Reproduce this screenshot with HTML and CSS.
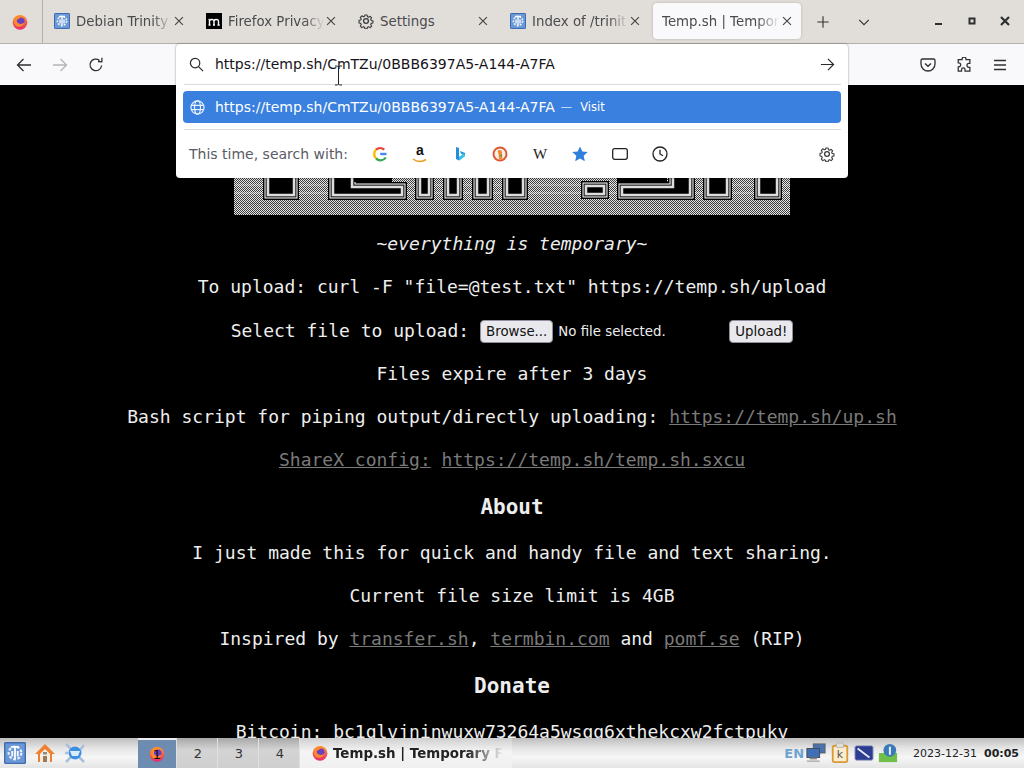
FILE: index.html
```html
<!DOCTYPE html>
<html lang="en">
<head>
<meta charset="utf-8">
<title>Temp.sh | Temporary File Sharing</title>
<link rel="stylesheet" href="styles.css">
</head>
<body>
<svg class="defs" width="0" height="0" aria-hidden="true">
  <defs>
    <linearGradient id="ffg" x1="0" y1="0" x2="0" y2="1"><stop offset="0" stop-color="#ff9a2e"/><stop offset="1" stop-color="#e8286e"/></linearGradient>
    <symbol id="firefox" viewBox="0 0 16 16">
      <circle cx="8" cy="8.3" r="7.4" fill="url(#ffg)"/>
      <circle cx="8.6" cy="7.6" r="4" fill="#6b3fc0"/>
      <path d="M3 4C5 1 10 .6 13 3c-3-1-5 0-6 2-2 0-3 1-2 3 1 2 5 3 8 0-1 4-6 6-9 4C2 10 1.500 7 3 4z" fill="#ff8a2a"/>
    </symbol>
    <symbol id="trinity" viewBox="0 0 16 16">
      <rect width="16" height="16" rx="1" fill="#6a98d6"/>
      <rect x=".5" y=".5" width="15" height="15" rx="1" fill="none" stroke="#3f6cb0"/>
      <circle cx="8" cy="8" r="4.600" fill="none" stroke="#e8f0fa" stroke-width="1.600" stroke-dasharray="2 1.200"/>
      <path d="M5 3.500h6M8 3.500v9M6 6.500v4M10 6.500v4" stroke="#fff" stroke-width="1.300" fill="none"/>
    </symbol>
    <symbol id="gear" viewBox="0 0 16 16">
      <path d="M6.700 1.500h2.600l.4 2 1.300.6 1.800-1.100 1.800 1.800-1.100 1.800.6 1.300 2 .4v2.600l-2 .4-.6 1.300 1.100 1.800-1.800 1.800-1.800-1.100-1.300.6-.4 2H6.700l-.4-2-1.300-.6-1.800 1.100-1.800-1.800 1.100-1.800-.6-1.300-2-.4V7.800l2-.4.6-1.300-1.100-1.800L3.200 2.500 5 3.600l1.300-.6z" transform="translate(1.100 .7) scale(.86)" fill="none" stroke="#3b3b3f" stroke-width="1.300" stroke-linejoin="round"/>
      <circle cx="8" cy="8" r="2.400" fill="none" stroke="#3b3b3f" stroke-width="1.300"/>
    </symbol>
    <path id="tx" d="M3.500 3.500l9 9M12.500 3.500l-9 9"/>
    <pattern id="dither" width="2" height="2" patternUnits="userSpaceOnUse">
      <rect width="2" height="2" fill="#3c3c3c"/>
      <rect width="1" height="1" fill="#e8e8e8"/>
      <rect x="1" y="1" width="1" height="1" fill="#e8e8e8"/>
    </pattern>
    <g id="letters">
      <rect x="34" y="-5" width="26" height="115"/>
      <path d="M99-5v115h69V102H118V-5z"/>
      <rect x="186" y="-5" width="9" height="115"/>
      <rect x="214" y="-5" width="10" height="115"/>
      <rect x="243" y="-5" width="11" height="115"/>
      <rect x="273" y="-5" width="16" height="115"/>
      <rect x="352" y="101" width="18" height="8"/>
      <path d="M388 110h68V-5h-17v107h-51z"/>
      <rect x="474" y="-5" width="19" height="115"/>
      <rect x="525" y="-5" width="18" height="115"/>
    </g>
  </defs>
</svg>

<div class="app">
  <header class="tabbar">
    <div class="ff-button"><svg class="ico16"><use href="#firefox"/></svg></div>
    <div class="tab">
      <svg class="ico16"><use href="#trinity"/></svg>
      <span class="tab-title">Debian Trinity</span>
      <svg class="tab-x" viewBox="0 0 16 16"><use href="#tx"/></svg>
    </div>
    <div class="tab">
      <svg class="ico16" viewBox="0 0 16 16"><rect width="16" height="16" fill="#000"/><path d="M3.500 12V6.500M3.500 7.500c1-1.500 4.500-1.500 4.500 .5V12M8 7.500c1-1.500 4.500-1.500 4.500 .5V12M2.500 6.500h1M2.500 12h2M7 12h2M11.500 12h2.200" stroke="#fff" stroke-width="1.400" fill="none"/></svg>
      <span class="tab-title">Firefox Privacy</span>
      <svg class="tab-x" viewBox="0 0 16 16"><use href="#tx"/></svg>
    </div>
    <div class="tab">
      <svg class="ico16"><use href="#gear"/></svg>
      <span class="tab-title tab-plain">Settings</span>
      <svg class="tab-x" viewBox="0 0 16 16"><use href="#tx"/></svg>
    </div>
    <div class="tab">
      <svg class="ico16"><use href="#trinity"/></svg>
      <span class="tab-title">Index of /trinity</span>
      <svg class="tab-x" viewBox="0 0 16 16"><use href="#tx"/></svg>
    </div>
    <div class="tab tab-active">
      <span class="tab-title">Temp.sh | Temporary</span>
      <svg class="tab-x" viewBox="0 0 16 16"><use href="#tx"/></svg>
    </div>
    <svg class="tb-btn plus" viewBox="0 0 16 16"><path d="M8 1.500v13M1.500 8h13"/></svg>
    <svg class="tb-btn chevron" viewBox="0 0 16 16"><path d="M2.500 5.500L8 11l5.500-5.500"/></svg>
    <div class="winctl">
      <svg viewBox="0 0 12 12"><rect x="2" y="8" width="7" height="2" fill="#2e2e2e"/></svg>
      <svg viewBox="0 0 12 12"><rect x="3.500" y="3.500" width="5" height="5" fill="none" stroke="#2e2e2e" stroke-width="2"/></svg>
      <svg viewBox="0 0 12 12"><path d="M2 2l8 8M10 2l-8 8" stroke="#2e2e2e" stroke-width="2.200"/></svg>
    </div>
  </header>

  <nav class="navbar">
    <div class="nav-left">
      <svg class="nav-ico" viewBox="0 0 16 16"><path d="M15 8H1.500M7.500 2L1.500 8l6 6"/></svg>
      <svg class="nav-ico dim" viewBox="0 0 16 16"><path d="M1 8h13.500M8.500 2l6 6-6 6"/></svg>
      <svg class="nav-ico" viewBox="0 0 16 16"><path d="M13.600 8.500A5.800 5.800 0 1 1 11.500 3.400M10 4.500l3.800.3.200-4"/></svg>
    </div>
    <div class="nav-right">
      <svg class="nav-ico" viewBox="0 0 16 16"><path d="M2.500 2h11A1.500 1.500 0 0 1 15 3.500V7a7 7 0 0 1-14 0V3.500A1.500 1.500 0 0 1 2.500 2zM5 6.500L8 9.300 11 6.500"/></svg>
      <svg class="nav-ico" viewBox="0 0 16 16"><path d="M6 3V2.500a2 2 0 0 1 4 0V3h4v4h-1a2 2 0 0 0 0 4h1v4H9v-1.500a1.800 1.800 0 0 0-3.600 0V15H2v-4.500h.5a2 2 0 0 0 0-4H2V3z" transform="translate(.3 -.4) scale(.97)"/></svg>
      <svg class="nav-ico" viewBox="0 0 16 16"><path d="M2 3.500h12M2 8h12M2 12.500h12"/></svg>
    </div>
  </nav>

  <main class="page">
    <svg class="banner" width="556" height="130" viewBox="0 0 556 130" aria-hidden="true">
      <rect width="556" height="130" fill="url(#dither)"/>
      <rect y="107" width="556" height="2" fill="#fff" opacity=".25"/>
      <rect y="99" width="556" height="2" fill="#fff" opacity=".2"/>
      <rect y="118" width="556" height="1" fill="#000" opacity=".15"/>
      <use href="#letters" class="l1"/>
      <use href="#letters" class="l2"/>
      <use href="#letters" class="l3"/>
      <use href="#letters" class="l4"/>
      <rect x="120" y="88" width="38" height="9" fill="#000"/>
      <rect x="383" y="88" width="50" height="9" fill="#000"/>
    </svg>
    <p><em>~everything is temporary~</em></p>
    <p>To upload: curl -F "file=@test.txt" https://temp.sh/upload</p>
    <div class="upload-row">
      <span class="upload-label">Select file to upload:</span>
      <button class="fbtn browse" type="button">Browse...</button>
      <span class="nofile">No file selected.</span>
      <button class="fbtn" type="button">Upload!</button>
    </div>
    <p>Files expire after 3 days</p>
    <p>Bash script for piping output/directly uploading: <a href="#">https://temp.sh/up.sh</a></p>
    <p><a href="#">ShareX config:</a> <a href="#">https://temp.sh/temp.sh.sxcu</a></p>
    <h3>About</h3>
    <p>I just made this for quick and handy file and text sharing.</p>
    <p>Current file size limit is 4GB</p>
    <p>Inspired by <a href="#">transfer.sh</a>, <a href="#">termbin.com</a> and <a href="#">pomf.se</a> (RIP)</p>
    <h3>Donate</h3>
    <p>Bitcoin: bc1qlvjninwuxw73264a5wsgg6xthekcxw2fctpukv</p>
  </main>

  <footer class="taskbar">
    <div class="launchers">
      <svg class="ico22" viewBox="0 0 16 16"><use href="#trinity"/></svg>
      <svg class="ico22" viewBox="0 0 22 22"><path d="M11 2L1 12h3v8h14v-8h3z" fill="#f08030"/><path d="M6 12l5-5 5 5v8H6z" fill="#f4efe6"/><rect x="9" y="14" width="4" height="6" fill="#9b7a55"/><rect x="9" y="10" width="4" height="2.500" fill="#8a8a80"/></svg>
      <svg class="ico22" viewBox="0 0 22 22"><path d="M2 2l5 5M20 3l-4 5M2 20l5-5M20 20l-5-5M1 11h3" stroke="#a9bfdc" stroke-width="2.500"/><circle cx="11" cy="11" r="6.500" fill="#3f8fe0"/><path d="M6 9h10l-2 5H8z" fill="#d8ecfb"/></svg>
    </div>
    <div class="pager">
      <div class="desk desk-on"><svg class="ico16"><use href="#firefox"/></svg><span class="desk-n">1</span></div>
      <div class="desk">2</div>
      <div class="desk">3</div>
      <div class="desk">4</div>
    </div>
    <div class="task">
      <svg class="ico16"><use href="#firefox"/></svg>
      <span class="task-title">Temp.sh | Temporary File Sharing</span>
    </div>
    <div class="tray">
      <span class="lang">EN</span>
      <svg class="tray-ico" viewBox="0 0 22 22"><rect x="8" y="1" width="13" height="10" fill="#4a72ad" stroke="#5a5f68"/><rect x="1" y="6" width="14" height="10" fill="#3f6fb5" stroke="#44484f"/><rect x="4" y="16" width="8" height="2" fill="#888"/><rect x="1" y="19" width="14" height="2" fill="#b9b9b9"/></svg>
      <svg class="tray-ico" viewBox="0 0 22 22"><rect x="3" y="3" width="16" height="18" rx="2" fill="#fbeccb" stroke="#d8993a" stroke-width="2"/><rect x="7" y="0" width="8" height="5" rx="1" fill="#ddd" stroke="#999" stroke-width=".6"/><text x="11" y="17" class="tray-k">k</text></svg>
      <svg class="tray-ico" viewBox="0 0 22 22"><rect x="1" y="3" width="20" height="16" rx="2" fill="#2c3c90" stroke="#9fa6c5"/><path d="M4 6l13 10" stroke="#e6e9f5" stroke-width="2"/></svg>
      <svg class="tray-ico tray-last" viewBox="0 0 22 22"><rect x="1" y="11" width="20" height="10" fill="#6fbf4a"/><circle cx="13" cy="8" r="7" fill="#3a7ab8"/><rect x="12" y="4" width="2.200" height="9" fill="#e6eef8"/></svg>
      <span class="date">2023-12-31</span>
      <span class="time">00:05</span>
    </div>
  </footer>

  <div class="urlbar">
    <div class="url-row">
      <svg class="u-ico" viewBox="0 0 16 16"><circle cx="6.500" cy="6.500" r="5"/><path d="M10.200 10.200L15 15"/></svg>
      <span class="url-text">https://temp.sh/CmTZu/0BBB6397A5-A144-A7FA</span>
      <svg class="u-ico" viewBox="0 0 16 16"><path d="M1 8h13.500M8.500 2l6 6-6 6"/></svg>
    </div>
    <div class="u-div"></div>
    <div class="result">
      <svg class="u-ico r-globe" viewBox="0 0 16 16"><circle cx="8" cy="8" r="7"/><ellipse cx="8" cy="8" rx="3.200" ry="7"/><path d="M1.200 5.800h13.600M1.200 10.200h13.600"/></svg>
      <span class="r-url">https://temp.sh/CmTZu/0BBB6397A5-A144-A7FA</span>
      <span class="r-dash">—</span>
      <span class="r-visit">Visit</span>
    </div>
    <div class="u-div u-div2"></div>
    <div class="oneoff">
      <span class="oneoff-label">This time, search with:</span>
      <div class="engines">
        <svg class="eng" viewBox="0 0 16 16"><path d="M14.500 8H8.200" stroke="#4285f4" stroke-width="2.400" fill="none"/><path d="M13.700 11.500A6 6 0 0 1 4 12.300" stroke="#34a853" stroke-width="2.400" fill="none"/><path d="M4 12.300A6 6 0 0 1 4 3.700" stroke="#fbbc05" stroke-width="2.400" fill="none"/><path d="M4 3.700A6 6 0 0 1 12.200 3.700" stroke="#ea4335" stroke-width="2.400" fill="none"/></svg>
        <span class="eng amazon"><span class="am-a">a</span><svg viewBox="0 0 16 5" class="am-s"><path d="M1 1c4 3 9 3 13 .5" stroke="#f09a1a" stroke-width="1.500" fill="none"/></svg></span>
        <svg class="eng" viewBox="0 0 16 16"><path d="M4 1l3 1v9l4-2.300-2-1L8 5l5 2v3l-6 4.500L4 13z" fill="#1f8fd8"/><path d="M7 11l4-2.300-2-1 1-.5 3 1.300v1.500L7 14.500z" fill="#36c3e8"/></svg>
        <svg class="eng" viewBox="0 0 16 16"><circle cx="8" cy="8" r="7.500" fill="#de5833"/><circle cx="8" cy="8" r="5.500" fill="#f4f0ea"/><path d="M5.500 4.500c3-1.500 5 0 4.500 3l.5 6H7L6.500 8z" fill="#f08a30"/><path d="M7 9.500l3-.8v1.800z" fill="#3f9e46"/></svg>
        <span class="eng wiki">W</span>
        <svg class="eng" viewBox="0 0 16 16"><path d="M8 .5l2.300 5 5.400.6-4 3.700 1.100 5.400L8 12.500l-4.800 2.700 1.100-5.400-4-3.700 5.400-.6z" fill="#2f80dc"/></svg>
        <svg class="eng line" viewBox="0 0 16 16"><rect x=".7" y="2.700" width="14.600" height="10.600" rx="2"/></svg>
        <svg class="eng line" viewBox="0 0 16 16"><circle cx="8" cy="8" r="7"/><path d="M8 3.800V8l3 1.800"/></svg>
      </div>
      <svg class="eng"><use href="#gear"/></svg>
    </div>
  </div>

  <svg class="ibeam" viewBox="0 0 9 21" aria-hidden="true"><path d="M1 1h2.500L4.500 2l1-1H8M4.500 2v17M1 20h2.500l1-1 1 1H8"/></svg>
</div>
</body>
</html>
```
FILE: styles.css
```css
* { box-sizing: border-box; }
html, body { margin: 0; height: 100%; }
body { overflow: hidden; background: #000; }
.defs { position: absolute; }

.app {
  position: relative;
  width: 1024px;
  height: 768px;
  display: flex;
  flex-direction: column;
  overflow: hidden;
  font-family: "DejaVu Sans", sans-serif;
}

.ico16 { width: 16px; height: 16px; flex: none; display: block; }

/* Tab strip */
.tabbar {
  height: 44px;
  flex: none;
  display: flex;
  align-items: center;
  background: #e1ded9;
  border-bottom: 1px solid #b4b1ac;
}
.ff-button {
  width: 43px;
  height: 43px;
  flex: none;
  display: flex;
  align-items: center;
  justify-content: center;
  border-right: 1px solid #b4b1ac;
  padding-right: 3px;
}
.tab {
  width: 152px;
  height: 36px;
  flex: none;
  display: flex;
  align-items: center;
  padding: 0 11px;
  gap: 6px;
  font-size: 13.330px;
  color: #4a4a4f;
  margin-top: -1px;
}
.tab:first-of-type { margin-left: 1px; }
.tab-title {
  flex: 1;
  min-width: 0;
  margin-right: -6px;
  white-space: nowrap;
  overflow: hidden;
  -webkit-mask-image: linear-gradient(to right, #000 80%, transparent 100%);
  mask-image: linear-gradient(to right, #000 80%, transparent 100%);
}
.tab-plain { -webkit-mask-image: none; mask-image: none; }
.tab-x {
  width: 14px;
  height: 14px;
  flex: none;
  fill: none;
  stroke: #444;
  stroke-width: 1.300;
  margin-right: -2px;
}
.tab-active {
  width: 148px;
  margin: -1px 2px 0;
  padding: 0 9px 0 9px;
  background: #f9f9fb;
  border-radius: 4px;
  box-shadow: 0 0 3px rgba(0, 0, 0, .2);
}
.tb-btn { fill: none; stroke: #333; stroke-width: 1.300; width: 14px; height: 14px; flex: none; }
.plus { margin-left: 13px; }
.chevron { margin-left: 27px; }
.winctl {
  margin-left: auto;
  display: flex;
  gap: 21px;
  padding-right: 13px;
  margin-top: -2px;
}
.winctl svg { width: 12px; height: 12px; display: block; }

/* Navigation */
.navbar {
  height: 41px;
  flex: none;
  display: flex;
  align-items: center;
  justify-content: space-between;
  background: #f9f9fb;
  padding: 0 16px 0 16px;
}
.nav-left, .nav-right { display: flex; align-items: center; }
.nav-left { gap: 20px; }
.nav-right { gap: 20px; }
.nav-ico { width: 16px; height: 16px; fill: none; stroke: #2f2f33; stroke-width: 1.300; display: block; }
.nav-ico.dim { stroke: #b4b4b8; }

/* Page */
.page {
  flex: 1;
  min-height: 0;
  overflow: hidden;
  background: #000;
  color: #eee;
  font-family: "DejaVu Sans Mono", monospace;
  font-size: 18px;
  line-height: 22px;
  text-align: center;
}
.banner { display: block; margin: 0 auto 18px; }
.l1 { fill: #000; stroke: #000; stroke-width: 10; }
.l2 { fill: #000; stroke: #fff; stroke-width: 7; }
.l3 { fill: #000; stroke: #222; stroke-width: 5; }
.l4 { fill: #000; stroke: #ddd; stroke-width: 2.500; }
.page p { margin: 0 0 21px; }
.page a { color: #7a7a7a; text-decoration: underline; }
.page h3 {
  margin: 24px 0 23px;
  font-size: 21px;
  line-height: 24px;
  font-weight: 700;
}
.upload-row {
  height: 23px;
  margin-bottom: 21px;
  display: flex;
  justify-content: center;
  align-items: center;
}
.upload-label { white-space: pre; margin-right: 11px; }
.fbtn {
  height: 23px;
  padding: 0 5px;
  border: 1px solid #8f8f9d;
  border-radius: 4px;
  background: #e9e9ed;
  color: #111;
  font-family: "DejaVu Sans", sans-serif;
  font-size: 13.330px;
  line-height: 20px;
  position: relative;
  top: 1px;
}
.nofile {
  font-family: "DejaVu Sans", sans-serif;
  font-size: 13.330px;
  color: #eee;
  margin-left: 5px;
  width: 171px;
  text-align: left;
  position: relative;
  top: 1px;
}

/* Panel */
.taskbar {
  height: 30px;
  flex: none;
  display: flex;
  align-items: stretch;
  background: linear-gradient(#bdbdbd 0, #e6e6e6 35%, #f6f6f6 65%, #e4e4e4 100%);
  color: #222;
  font-size: 13.400px;
  position: relative;
}
.launchers { display: flex; align-items: center; gap: 8px; padding-left: 4px; width: 138px; }
.ico22 { width: 22px; height: 22px; display: block; flex: none; }
.pager { display: flex; width: 162px; }
.desk {
  width: 41px;
  display: flex;
  align-items: center;
  justify-content: center;
  background: linear-gradient(#a8a8a8, #d4d4d4 40%, #cfcfcf);
  border-right: 1px solid #e0e0e0;
  font-size: 13px;
  color: #333;
  padding-left: 2px;
}
.desk-on {
  position: relative;
  width: 39px;
  padding-left: 0;
  background: #6e8bb0;
  border-top: 2px solid #eee;
}
.desk-n { position: absolute; color: #111; }
.task {
  width: 212px;
  display: flex;
  align-items: center;
  gap: 5px;
  padding-left: 12px;
  background: linear-gradient(#cfcfcf, #f4f4f4 45%, #f0f0f0);
  overflow: hidden;
}
.task-title {
  font-weight: 700;
  white-space: nowrap;
  overflow: hidden;
  flex: 1;
  min-width: 0;
  -webkit-mask-image: linear-gradient(to right, #000 75%, transparent 95%);
  mask-image: linear-gradient(to right, #000 75%, transparent 95%);
}
.tray { margin-left: auto; display: flex; align-items: center; padding-right: 5px; }
.lang { font-size: 13px; font-weight: 700; color: #6ba4d0; margin-right: 2px; }
.tray-ico { width: 20px; height: 22px; margin-right: 4px; display: block; }
.tray-last { margin-right: 0; }
.tray-k { font: 12px "DejaVu Sans", sans-serif; fill: #555; text-anchor: middle; }
.date { font-size: 11px; margin-left: 15px; margin-right: 7px; }
.time { font-size: 11px; font-weight: 700; }

/* URL bar dropdown */
.urlbar {
  position: absolute;
  left: 176px;
  top: 44px;
  width: 672px;
  height: 134px;
  background: #fff;
  border-radius: 4px;
  box-shadow: 0 0 2px rgba(0, 0, 0, .5);
  display: flex;
  flex-direction: column;
  color: #15141a;
  font-size: 14px;
}
.url-row {
  height: 40px;
  flex: none;
  display: flex;
  align-items: center;
  padding: 0 13px;
}
.u-ico { width: 15px; height: 15px; flex: none; fill: none; stroke: #2b2b2f; stroke-width: 1.300; }
.url-text { flex: 1; margin-left: 11px; }
.u-div { height: 1px; flex: none; background: #dcdcde; margin: 0 7px 0 8px; }
.result {
  height: 32px;
  flex: none;
  margin: 6px 7px 0;
  background: #3a80de;
  border-radius: 4px;
  color: #fff;
  display: flex;
  align-items: center;
  padding-left: 7px;
}
.r-globe { stroke: #e8f0fc; }
.r-url { margin-left: 10px; }
.r-dash { margin-left: 6px; font-size: 11.500px; opacity: .75; }
.r-visit { margin-left: 8px; font-size: 11.500px; }
.u-div2 { margin-top: 6px; }
.oneoff {
  flex: 1;
  display: flex;
  align-items: center;
  padding: 0 13px;
  color: #5b5b66;
}
.oneoff-label { width: 183px; flex: none; font-size: 14px; }
.engines { display: flex; align-items: center; gap: 24px; flex: 1; }
.eng { width: 16px; height: 16px; flex: none; display: block; }
.eng.line { fill: none; stroke: #222; stroke-width: 1.300; }
.amazon { position: relative; font-family: "Liberation Sans", sans-serif; font-weight: 700; color: #111; line-height: 14px; text-align: center; font-size: 14px; }
.am-a { display: block; margin-top: -3px; }
.am-s { position: absolute; left: 0; bottom: -1px; width: 16px; height: 5px; }
.wiki { font-family: "Liberation Serif", serif; font-size: 15px; color: #222; line-height: 16px; text-align: center; }

.ibeam {
  position: absolute;
  left: 334px;
  top: 65px;
  width: 9px;
  height: 21px;
  fill: none;
  stroke: #222;
  stroke-width: 1;
}
```
